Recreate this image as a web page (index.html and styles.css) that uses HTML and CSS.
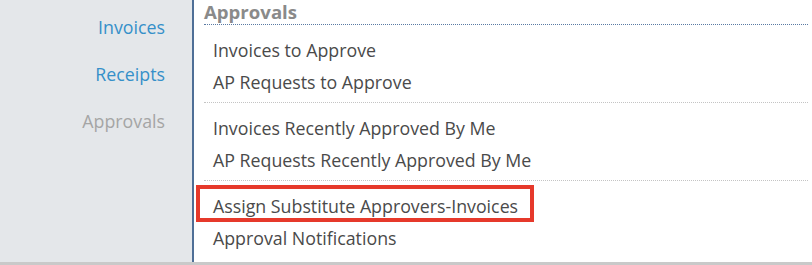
FILE: index.html
```html
<!DOCTYPE html>
<html lang="en">

<head>
  <meta charset="UTF-8">
  <meta name="viewport" content="width=device-width, initial-scale=1.0">
  <title>Approvals</title>
  <link rel="stylesheet" href="styles.css">
</head>

<body>
  <div class="page">
    <div class="sidebar">
      <a href="#" class="side-link">Invoices</a>
      <a href="#" class="side-link">Receipts</a>
      <span class="side-link current">Approvals</span>
    </div>

    <div class="main">
      <h2 class="section-title">Approvals</h2>

      <div class="group">
        <a href="#" class="item">Invoices to Approve</a>
        <a href="#" class="item">AP Requests to Approve</a>
      </div>

      <div class="group">
        <a href="#" class="item">Invoices Recently Approved By Me</a>
        <a href="#" class="item">AP Requests Recently Approved By Me</a>
      </div>

      <div class="group last">
        <a href="#" class="item marked">Assign Substitute Approvers-Invoices</a>
        <a href="#" class="item">Approval Notifications</a>
      </div>
    </div>
  </div>
</body>

</html>
```

FILE: styles.css
```css
body {
  margin: 0;
  background-color: white;
  font-family: "Open Sans", "Noto Sans", sans-serif;
}

a {
  text-decoration: none;
}

.page {
  display: flex;
  height: 262px;
  border-bottom: 3px solid #c9c9c9;
  overflow: hidden;
}

.sidebar {
  width: 192px;
  flex-shrink: 0;
  background-color: #e4e7ea;
  display: flex;
  flex-direction: column;
  align-items: flex-end;
  padding: 15px 27px 0 0;
  box-sizing: border-box;
  gap: 23px;
}

.side-link {
  font-size: 17.8px;
  line-height: 24px;
  color: #3590c9;
}

.side-link.current {
  color: #a5a5a5;
}

.main {
  flex: 1;
  border-left: 2px solid #4f6f97;
  padding: 0 4px 0 10px;
}

.section-title {
  margin: 0;
  font-size: 18.6px;
  line-height: 24px;
  font-weight: bold;
  color: #8a8a8a;
  border-bottom: 1px dotted #5a7aa3;
}

.group {
  display: flex;
  flex-direction: column;
  align-items: flex-start;
  padding: 9px 0 4px 9px;
  border-bottom: 1px dotted #c4c4c4;
}

.group.last {
  border-bottom: none;
}

.item {
  font-size: 17.8px;
  line-height: 32px;
  color: #4a4a4a;
}

.item.marked {
  position: relative;
}

.item.marked::after {
  content: "";
  position: absolute;
  left: -17px;
  right: -16px;
  top: -5px;
  bottom: 0;
  border: 4px solid #e6392b;
}
```
